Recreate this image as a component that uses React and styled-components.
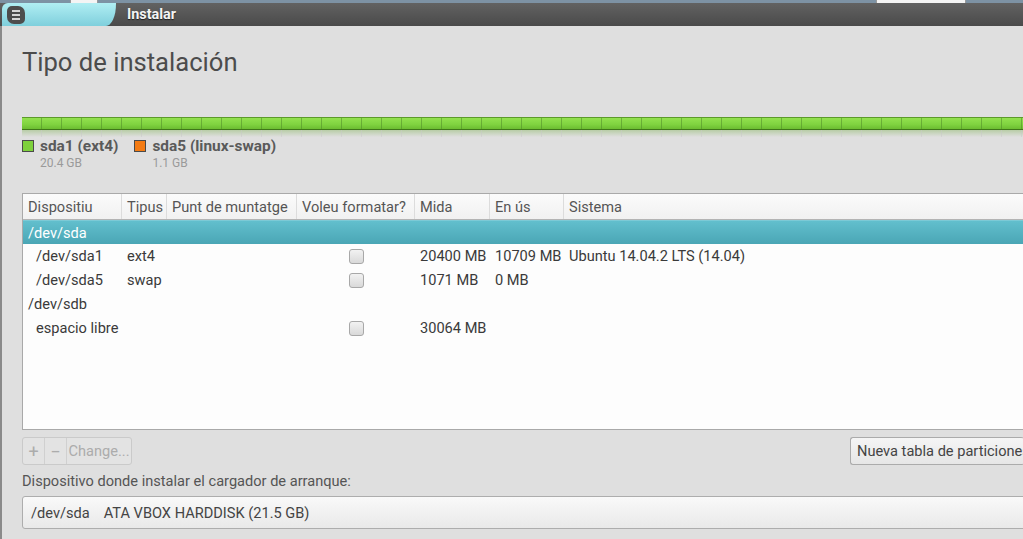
import React from "react";
import styled, { createGlobalStyle } from "styled-components";

const Global = createGlobalStyle`
  html, body { margin: 0; padding: 0; overflow: hidden; background: #dfdfdf; }
  body { font-family: Roboto, "Noto Sans", "DejaVu Sans", sans-serif; }
`;

const Window = styled.div`
  width: 1023px;
  height: 539px;
  overflow: hidden;
  display: flex;
  flex-direction: column;
`;

const DesktopStrip = styled.div`
  height: 3px;
  flex: none;
  background: #7d92a4;
  display: flex;
`;

const DeskItem = styled.div`
  height: 3px;
  margin-left: ${(p) => p.$left}px;
  width: ${(p) => p.$w}px;
  background: #f4f4f4;
  border-left: 1px solid #999;
  border-right: 1px solid #999;
`;

const TitleBar = styled.div`
  height: 23px;
  flex: none;
  display: flex;
  align-items: stretch;
  background: linear-gradient(#626262, #4a4a4a);
`;

const Tab = styled.div`
  width: 114px;
  margin-left: 2px;
  flex: none;
  display: flex;
  align-items: center;
  padding-left: 5px;
  box-sizing: border-box;
  background: linear-gradient(#b0eef3, #7fcfdc);
  border-top-left-radius: 6px;
  border-bottom-right-radius: 10px 22px;
`;

const MenuIcon = styled.div`
  width: 18px;
  height: 18px;
  border-radius: 5px 7px 5px 7px;
  background: #4d4d4d;
  display: flex;
  flex-direction: column;
  justify-content: center;
  align-items: center;
  gap: 2px;
`;

const MenuLine = styled.span`
  width: 8px;
  height: 2px;
  background: #d8d8d8;
`;

const TitleText = styled.div`
  color: #f4f4f4;
  font-weight: 700;
  font-size: 14.4px;
  display: flex;
  align-items: center;
  padding-left: 11px;
  text-shadow: 0 1px 1px rgba(0, 0, 0, 0.6);
`;

const Body = styled.div`
  flex: 1;
  border-left: 2px solid #8a8a8a;
  background: #dfdfdf;
  padding: 21px 0 0 20px;
  display: flex;
  flex-direction: column;
  width: 1100px;
`;

const Heading = styled.h1`
  margin: 0;
  font-size: 25.6px;
  line-height: 30px;
  font-weight: 400;
  color: #4c4c4c;
`;

const BarWrap = styled.div`
  margin-top: 40px;
  display: flex;
  flex-direction: column;
`;

const Bar = styled.div`
  height: 13px;
  box-sizing: border-box;
  border-top: 1px solid #5c9a2a;
  border-bottom: 1px solid #3f7619;
  background:
    repeating-linear-gradient(90deg, transparent 0 19px, rgba(80, 140, 40, 0.55) 19px 20px),
    linear-gradient(#93e24f, #7fd23f 60%, #6cbd31);
`;

const Reflection = styled.div`
  height: 7px;
  background:
    repeating-linear-gradient(90deg, transparent 0 19px, rgba(200, 200, 200, 0.5) 19px 20px),
    linear-gradient(rgba(110, 170, 60, 0.35), rgba(223, 223, 223, 0));
`;

const Legend = styled.div`
  margin-top: 1px;
  display: flex;
  gap: 16px;
`;

const LegendItem = styled.div`
  display: grid;
  grid-template-columns: 12px auto;
  column-gap: 6px;
  align-items: center;
`;

const Swatch = styled.span`
  width: 12px;
  height: 12px;
  box-sizing: border-box;
  border: 1px solid #4a4a4a;
  background: ${(p) => p.$color};
`;

const LegendName = styled.span`
  font-size: 15.4px;
  font-weight: 700;
  line-height: 16px;
  color: #5a5a5a;
`;

const LegendSize = styled.span`
  grid-column: 2;
  font-size: 12px;
  line-height: 14px;
  margin-top: 2px;
  color: #9a9a9a;
`;

const Table = styled.div`
  margin-top: 23px;
  height: 237px;
  box-sizing: border-box;
  border: 1px solid #a9a9a9;
  background: #fdfdfd;
  display: flex;
  flex-direction: column;
`;

const cols = "99px 45px 130px 118px 75px 74px 1fr";

const HeaderRow = styled.div`
  display: grid;
  grid-template-columns: ${cols};
  height: 26px;
  box-sizing: border-box;
  border-bottom: 1px solid #b4b4b4;
  background: linear-gradient(#fbfbfb, #f1f1f1);
`;

const HeaderCell = styled.div`
  font-size: 14.6px;
  color: #555;
  display: flex;
  align-items: center;
  padding-left: 5px;
  border-right: ${(p) => (p.$last ? "none" : "1px solid #dcdcdc")};
  white-space: nowrap;
  overflow: hidden;
`;

const Row = styled.div`
  display: grid;
  grid-template-columns: ${cols};
  height: 24px;
  box-sizing: border-box;
  color: ${(p) => (p.$selected ? "#ffffff" : "#3a3a3a")};
  background: ${(p) => (p.$selected ? "linear-gradient(#62bfcd, #4aa6b5)" : "transparent")};
  border-top: ${(p) => (p.$selected ? "1px solid #7ccad6" : "none")};
`;

const Cell = styled.div`
  font-size: 14.6px;
  display: flex;
  align-items: center;
  justify-content: ${(p) => (p.$center ? "center" : "flex-start")};
  padding-left: ${(p) => (p.$center ? 0 : p.$indent ? 13 : 5)}px;
  white-space: nowrap;
`;

const Check = styled.span`
  width: 15px;
  height: 15px;
  box-sizing: border-box;
  border: 1px solid #a8a8a8;
  border-radius: 3px;
  background: linear-gradient(#f2f2f2, #d9d9d9);
  margin-left: 1px;
`;

const Controls = styled.div`
  margin-top: 7px;
  display: flex;
  justify-content: space-between;
  align-items: center;
  width: 1001px;
`;

const BtnGroup = styled.div`
  display: flex;
  height: 28px;
  box-sizing: border-box;
  border: 1px solid #cacaca;
  border-radius: 3px;
  background: #e3e3e3;
`;

const GroupBtn = styled.div`
  display: flex;
  align-items: center;
  justify-content: center;
  width: ${(p) => p.$w}px;
  font-size: ${(p) => p.$fs || 14.6}px;
  color: #acacac;
  border-right: ${(p) => (p.$last ? "none" : "1px solid #d0d0d0")};
  white-space: nowrap;
`;

const Button = styled.div`
  height: 28px;
  box-sizing: border-box;
  border: 1px solid #ababab;
  border-radius: 3px;
  border-right: none;
  background: linear-gradient(#f5f5f5, #e6e6e6);
  display: flex;
  align-items: center;
  padding-left: 6px;
  width: 174px;
  font-size: 14.6px;
  color: #444;
  white-space: nowrap;
  overflow: hidden;
  margin-right: -1px;
`;

const Label = styled.div`
  margin-top: 8px;
  font-size: 14.6px;
  line-height: 16px;
  color: #555;
`;

const Combo = styled.div`
  margin-top: 7px;
  height: 33px;
  box-sizing: border-box;
  border: 1px solid #adadad;
  border-radius: 3px;
  background: linear-gradient(#f9f9f9, #e9e9e9);
  display: flex;
  align-items: center;
  gap: 14px;
  padding-left: 8px;
  font-size: 14.6px;
  color: #444;
`;

const rows = [
  { sel: true, dev: "/dev/sda" },
  { dev: "/dev/sda1", indent: true, type: "ext4", check: true, size: "20400 MB", used: "10709 MB", sys: "Ubuntu 14.04.2 LTS (14.04)" },
  { dev: "/dev/sda5", indent: true, type: "swap", check: true, size: "1071 MB", used: "0 MB" },
  { dev: "/dev/sdb" },
  { dev: "espacio libre", indent: true, check: true, size: "30064 MB" },
];

export default function App() {
  return (
    <>
      <Global />
      <Window>
        <DesktopStrip>
          <DeskItem $left={70} $w={26} />
          <DeskItem $left={778} $w={88} />
        </DesktopStrip>
        <TitleBar>
          <Tab>
            <MenuIcon>
              <MenuLine />
              <MenuLine />
              <MenuLine />
            </MenuIcon>
          </Tab>
          <TitleText>Instalar</TitleText>
        </TitleBar>
        <Body>
          <Heading>Tipo de instalación</Heading>
          <BarWrap>
            <Bar />
            <Reflection />
          </BarWrap>
          <Legend>
            <LegendItem>
              <Swatch $color="#7ed13c" />
              <LegendName>sda1 (ext4)</LegendName>
              <LegendSize>20.4 GB</LegendSize>
            </LegendItem>
            <LegendItem>
              <Swatch $color="#f47b13" />
              <LegendName>sda5 (linux-swap)</LegendName>
              <LegendSize>1.1 GB</LegendSize>
            </LegendItem>
          </Legend>
          <Table>
            <HeaderRow>
              <HeaderCell>Dispositiu</HeaderCell>
              <HeaderCell>Tipus</HeaderCell>
              <HeaderCell>Punt de muntatge</HeaderCell>
              <HeaderCell>Voleu formatar?</HeaderCell>
              <HeaderCell>Mida</HeaderCell>
              <HeaderCell>En ús</HeaderCell>
              <HeaderCell $last>Sistema</HeaderCell>
            </HeaderRow>
            {rows.map((r, i) => (
              <Row key={i} $selected={r.sel}>
                <Cell $indent={r.indent}>{r.dev}</Cell>
                <Cell>{r.type || ""}</Cell>
                <Cell />
                <Cell $center>{r.check ? <Check /> : null}</Cell>
                <Cell>{r.size || ""}</Cell>
                <Cell>{r.used || ""}</Cell>
                <Cell>{r.sys || ""}</Cell>
              </Row>
            ))}
          </Table>
          <Controls>
            <BtnGroup>
              <GroupBtn $w={21} $fs={18}>+</GroupBtn>
              <GroupBtn $w={21} $fs={18}>−</GroupBtn>
              <GroupBtn $w={64} $last>Change...</GroupBtn>
            </BtnGroup>
            <Button>Nueva tabla de particiones...</Button>
          </Controls>
          <Label>Dispositivo donde instalar el cargador de arranque:</Label>
          <Combo>
            <span>/dev/sda</span>
            <span>ATA VBOX HARDDISK (21.5 GB)</span>
          </Combo>
        </Body>
      </Window>
    </>
  );
}
